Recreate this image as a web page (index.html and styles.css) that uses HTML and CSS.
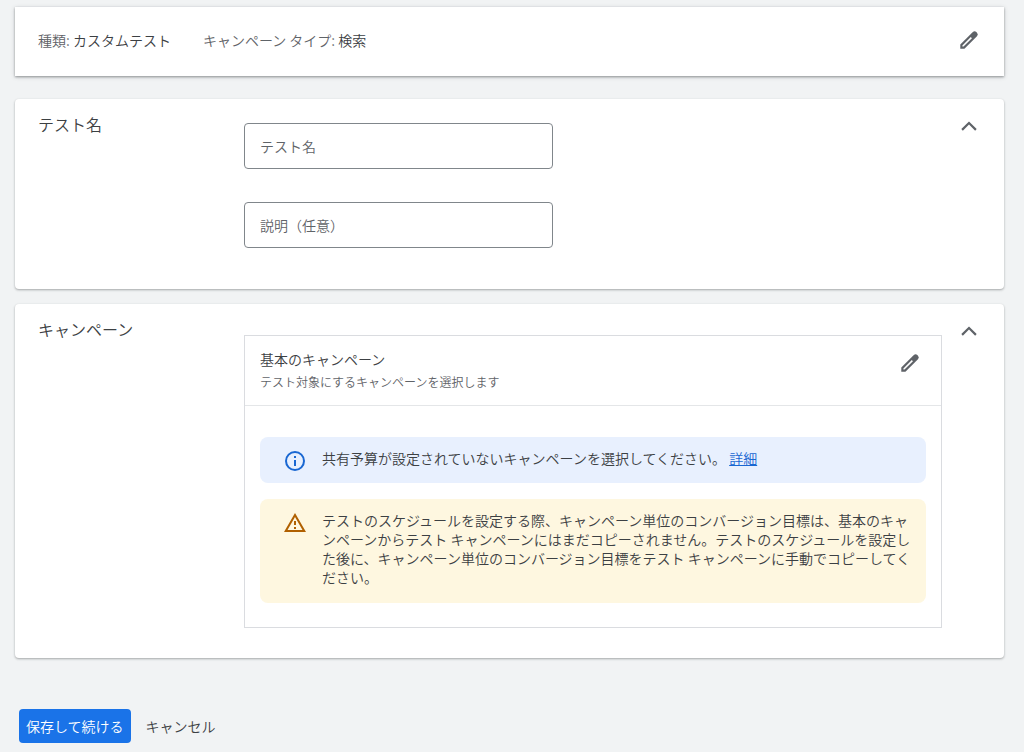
FILE: index.html
```
<!DOCTYPE html>
<html lang="ja">
<head>
<meta charset="utf-8">
<meta name="viewport" content="width=device-width, initial-scale=1">
<title>カスタムテスト</title>
<link rel="stylesheet" href="styles.css">
</head>
<body>
<form class="page">
  <header class="card summary">
    <p class="summary-item">種類: <span class="value">カスタムテスト</span></p>
    <p class="summary-item">キャンペーン タイプ: <span class="value">検索</span></p>
    <button class="icon-button summary-edit" type="button" aria-label="編集">
      <svg class="icon" viewBox="0 0 24 24" aria-hidden="true"><path fill-rule="evenodd" d="M2.5 17V21.500H7L20.700 7.800a2.700 2.700 0 0 0 0-3.800l-.7-.7a2.700 2.700 0 0 0-3.800 0ZM4.800 18l9.200-9.200 1.200 1.200L6 19.200H4.800Z"/></svg>
    </button>
  </header>

  <section class="card section name-section">
    <h2 class="section-title">テスト名</h2>
    <div class="fields">
      <input class="field" type="text" placeholder="テスト名" aria-label="テスト名">
      <input class="field" type="text" placeholder="説明（任意）" aria-label="説明（任意）">
    </div>
    <button class="icon-button" type="button" aria-label="テスト名を折りたたむ">
      <svg class="icon" viewBox="0 0 24 24" aria-hidden="true"><path d="m12 7-8.400 8.400 1.700 1.700L12 10.400l6.700 6.700 1.700-1.700Z"/></svg>
    </button>
  </section>

  <section class="card section campaign-section">
    <h2 class="section-title">キャンペーン</h2>
    <div class="panel">
      <div class="panel-header">
        <div class="panel-heading">
          <h3 class="panel-title">基本のキャンペーン</h3>
          <p class="panel-hint">テスト対象にするキャンペーンを選択します</p>
        </div>
        <button class="icon-button" type="button" aria-label="基本のキャンペーンを編集">
          <svg class="icon" viewBox="0 0 24 24" aria-hidden="true"><path fill-rule="evenodd" d="M2.5 17V21.500H7L20.700 7.800a2.700 2.700 0 0 0 0-3.800l-.7-.7a2.700 2.700 0 0 0-3.800 0ZM4.800 18l9.200-9.200 1.200 1.200L6 19.200H4.800Z"/></svg>
        </button>
      </div>
      <div class="panel-body">
        <div class="notice notice-info">
          <svg class="notice-icon" viewBox="0 0 24 24" aria-hidden="true"><path d="M11 7h2v2h-2zm0 4h2v6h-2zm1-9a10 10 0 1 0 0 20 10 10 0 0 0 0-20zm0 18a8 8 0 1 1 0-16 8 8 0 0 1 0 16z"/></svg>
          <p class="notice-text">共有予算が設定されていないキャンペーンを選択してください。 <a class="link" href="#">詳細</a></p>
        </div>
        <div class="notice notice-warning">
          <svg class="notice-icon" viewBox="0 0 24 24" aria-hidden="true"><path d="M12 6l7.500 13h-15L12 6m0-4L1 21h22L12 2zm1 14h-2v2h2zm0-6h-2v4h2z"/></svg>
          <p class="notice-text">テストのスケジュールを設定する際、キャンペーン単位のコンバージョン目標は、基本のキャンペーンからテスト キャンペーンにはまだコピーされません。テストのスケジュールを設定した後に、キャンペーン単位のコンバージョン目標をテスト キャンペーンに手動でコピーしてください。</p>
        </div>
      </div>
    </div>
    <button class="icon-button" type="button" aria-label="キャンペーンを折りたたむ">
      <svg class="icon" viewBox="0 0 24 24" aria-hidden="true"><path d="m12 7-8.400 8.400 1.700 1.700L12 10.400l6.700 6.700 1.700-1.700Z"/></svg>
    </button>
  </section>

  <div class="actions">
    <button class="button button-primary" type="submit">保存して続ける</button>
    <button class="button button-text" type="button">キャンセル</button>
  </div>
</form>
</body>
</html>
```

FILE: styles.css
```
* {
  box-sizing: border-box;
}

body {
  margin: 0;
  background: #f1f3f4;
  color: #3c4043;
  font-family: "Noto Sans CJK JP", "Noto Sans", sans-serif;
  font-size: 14px;
  font-weight: 350;
  line-height: 19px;
}

h2,
h3,
p {
  margin: 0;
  font-weight: 350;
}

button,
input {
  font: inherit;
}

.page {
  padding: 7px 20px 8px 15px;
}

.card {
  background: #fff;
  border-radius: 4px;
  box-shadow: 0 1px 2px rgba(60, 64, 67, 0.3), 0 1px 3px rgba(60, 64, 67, 0.15);
}

.summary {
  display: flex;
  align-items: center;
  gap: 32px;
  min-height: 69px;
  padding: 0 23px 3px;
  border-radius: 0;
  box-shadow: 0 1px 2px rgba(60, 64, 67, 0.4), 0 1px 4px rgba(60, 64, 67, 0.25);
}

.summary-item {
  color: #5f6368;
}

.value {
  color: #3c4043;
}

.summary-edit {
  margin-left: auto;
}

.icon-button {
  display: flex;
  flex: none;
  width: 24px;
  height: 24px;
  padding: 1px;
  border: 0;
  background: none;
  cursor: pointer;
}

.icon {
  width: 22px;
  height: 22px;
  fill: #5f6368;
}

.section {
  display: grid;
  grid-template-columns: 191px minmax(0, 1fr) 24px;
  column-gap: 15px;
  align-items: start;
  padding: 15px 23px 30px;
}

.name-section {
  margin-top: 23px;
  padding-bottom: 41px;
}

.campaign-section {
  margin-top: 15px;
}

.section-title {
  font-size: 16px;
  line-height: 20px;
}

.fields {
  display: grid;
  gap: 33px;
  max-width: 309px;
  padding-top: 9px;
}

.field {
  width: 100%;
  height: 46px;
  padding: 0 15px;
  border: 1px solid #80868b;
  border-radius: 4px;
  background: #fff;
  color: #3c4043;
}

.field::placeholder {
  color: #5f6368;
  opacity: 1;
}

.panel {
  margin-top: 16px;
  border: 1px solid #dadce0;
}

.panel-header {
  display: flex;
  align-items: center;
  justify-content: space-between;
  padding: 14px 19px 13px 15px;
  border-bottom: 1px solid #e4e6e8;
}

.panel-title {
  margin-bottom: 3px;
  font-size: 14px;
  line-height: 19px;
}

.panel-hint {
  color: #5f6368;
  font-size: 12px;
  line-height: 20px;
}

.panel-header .icon-button {
  margin-bottom: 16px;
}

.panel-body {
  display: grid;
  gap: 16px;
  padding: 31px 15px 24px;
}

.notice {
  display: grid;
  grid-template-columns: 24px minmax(0, 1fr);
  column-gap: 15px;
  align-items: start;
  padding: 12px 8px 16px 23px;
  border-radius: 8px;
}

.notice-info {
  padding-bottom: 10px;
  background: #e8f0fe;
  fill: #1967d2;
}

.notice-warning {
  background: #fef7e0;
  fill: #b06000;
}

.notice-icon {
  width: 24px;
  height: 24px;
}

.link {
  color: #1967d2;
  text-decoration: underline;
}

.actions {
  display: flex;
  gap: 8px;
  margin-top: 51px;
  padding-left: 4px;
}

.button {
  min-height: 34px;
  padding: 0 7px;
  border: 0;
  border-radius: 4px;
  cursor: pointer;
}

.button-primary {
  background: #1a73e8;
  color: #fff;
}

.button-text {
  background: none;
  color: #3c4043;
}
```
